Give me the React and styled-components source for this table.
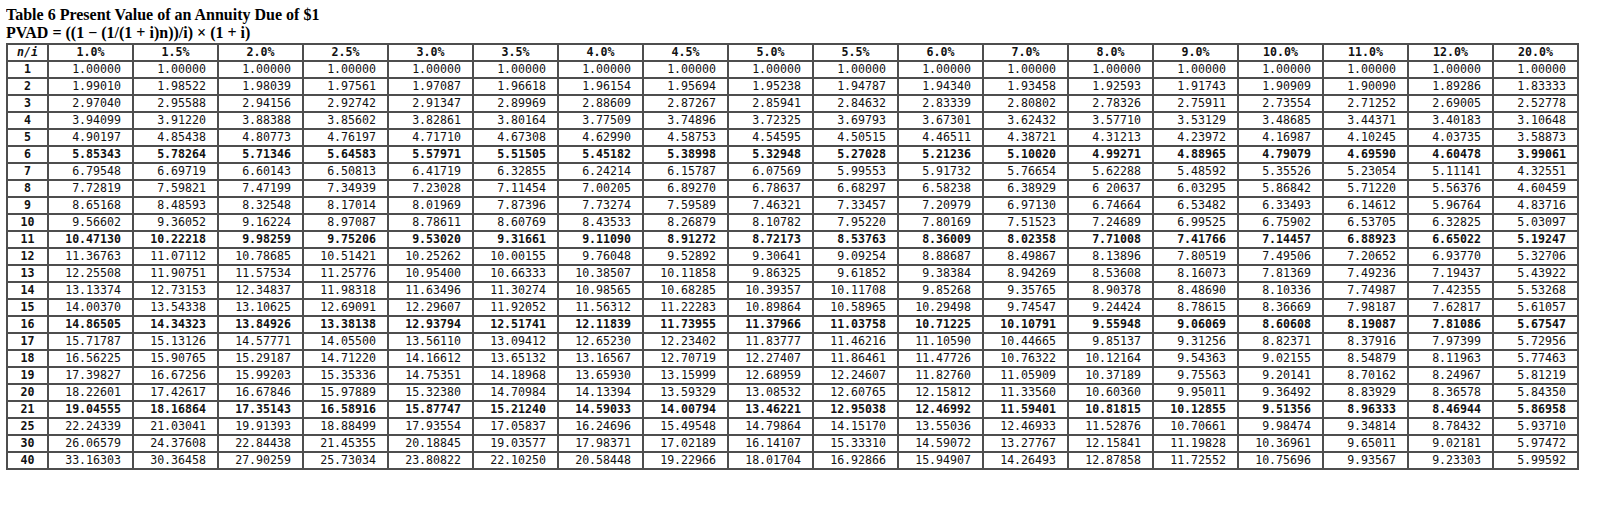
import React from 'react';
import styled, { createGlobalStyle } from 'styled-components';

const GlobalStyle = createGlobalStyle`
  body {
    margin: 6px;
    background: #fff;
    color: #000;
    font-family: "Liberation Serif", "Times New Roman", serif;
  }
`;

const Page = styled.div`
  display: flex;
  flex-direction: column;
  align-items: flex-start;
`;

const Heading = styled.div`
  font-family: "Liberation Serif", "Times New Roman", serif;
  font-weight: bold;
  font-size: 16px;
  line-height: 18.4px;
  color: #000;
`;

const Table = styled.table`
  border-collapse: collapse;
  table-layout: fixed;
  width: 1571px;
  font-family: "DejaVu Sans Mono", "Liberation Mono", monospace;
  font-size: 11.6px;
  color: #111;
  border: 2px solid #4e4e4e;
`;

const Col = styled.col`
  width: ${p => (p.$first ? '41px' : '85px')};
`;

const Th = styled.th`
  border: 2px solid #4e4e4e;
  padding: 0;
  height: 15.5px;
  line-height: 15px;
  font-weight: bold;
  text-align: center;
  font-style: ${p => (p.$italic ? 'italic' : 'normal')};
`;

const RowHead = styled.td`
  border: 2px solid #4e4e4e;
  padding: 0;
  height: 15px;
  line-height: 15px;
  text-align: center;
  font-weight: bold;
`;

const Cell = styled.td`
  border: 2px solid #4e4e4e;
  padding: 0 11px 0 0;
  height: 15px;
  line-height: 15px;
  text-align: right;
  font-weight: ${p => (p.$bold ? 'bold' : 'normal')};
  white-space: pre;
`;

const periods = [1, 2, 3, 4, 5, 6, 7, 8, 9, 10, 11, 12, 13, 14, 15, 16, 17, 18, 19, 20, 21, 25, 30, 40];
const boldRows = [6, 11, 16, 21];

const columns = [
  ['1.0%', '1.00000,1.99010,2.97040,3.94099,4.90197,5.85343,6.79548,7.72819,8.65168,9.56602,10.47130,11.36763,12.25508,13.13374,14.00370,14.86505,15.71787,16.56225,17.39827,18.22601,19.04555,22.24339,26.06579,33.16303'],
  ['1.5%', '1.00000,1.98522,2.95588,3.91220,4.85438,5.78264,6.69719,7.59821,8.48593,9.36052,10.22218,11.07112,11.90751,12.73153,13.54338,14.34323,15.13126,15.90765,16.67256,17.42617,18.16864,21.03041,24.37608,30.36458'],
  ['2.0%', '1.00000,1.98039,2.94156,3.88388,4.80773,5.71346,6.60143,7.47199,8.32548,9.16224,9.98259,10.78685,11.57534,12.34837,13.10625,13.84926,14.57771,15.29187,15.99203,16.67846,17.35143,19.91393,22.84438,27.90259'],
  ['2.5%', '1.00000,1.97561,2.92742,3.85602,4.76197,5.64583,6.50813,7.34939,8.17014,8.97087,9.75206,10.51421,11.25776,11.98318,12.69091,13.38138,14.05500,14.71220,15.35336,15.97889,16.58916,18.88499,21.45355,25.73034'],
  ['3.0%', '1.00000,1.97087,2.91347,3.82861,4.71710,5.57971,6.41719,7.23028,8.01969,8.78611,9.53020,10.25262,10.95400,11.63496,12.29607,12.93794,13.56110,14.16612,14.75351,15.32380,15.87747,17.93554,20.18845,23.80822'],
  ['3.5%', '1.00000,1.96618,2.89969,3.80164,4.67308,5.51505,6.32855,7.11454,7.87396,8.60769,9.31661,10.00155,10.66333,11.30274,11.92052,12.51741,13.09412,13.65132,14.18968,14.70984,15.21240,17.05837,19.03577,22.10250'],
  ['4.0%', '1.00000,1.96154,2.88609,3.77509,4.62990,5.45182,6.24214,7.00205,7.73274,8.43533,9.11090,9.76048,10.38507,10.98565,11.56312,12.11839,12.65230,13.16567,13.65930,14.13394,14.59033,16.24696,17.98371,20.58448'],
  ['4.5%', '1.00000,1.95694,2.87267,3.74896,4.58753,5.38998,6.15787,6.89270,7.59589,8.26879,8.91272,9.52892,10.11858,10.68285,11.22283,11.73955,12.23402,12.70719,13.15999,13.59329,14.00794,15.49548,17.02189,19.22966'],
  ['5.0%', '1.00000,1.95238,2.85941,3.72325,4.54595,5.32948,6.07569,6.78637,7.46321,8.10782,8.72173,9.30641,9.86325,10.39357,10.89864,11.37966,11.83777,12.27407,12.68959,13.08532,13.46221,14.79864,16.14107,18.01704'],
  ['5.5%', '1.00000,1.94787,2.84632,3.69793,4.50515,5.27028,5.99553,6.68297,7.33457,7.95220,8.53763,9.09254,9.61852,10.11708,10.58965,11.03758,11.46216,11.86461,12.24607,12.60765,12.95038,14.15170,15.33310,16.92866'],
  ['6.0%', '1.00000,1.94340,2.83339,3.67301,4.46511,5.21236,5.91732,6.58238,7.20979,7.80169,8.36009,8.88687,9.38384,9.85268,10.29498,10.71225,11.10590,11.47726,11.82760,12.15812,12.46992,13.55036,14.59072,15.94907'],
  ['7.0%', '1.00000,1.93458,2.80802,3.62432,4.38721,5.10020,5.76654,6.38929,6.97130,7.51523,8.02358,8.49867,8.94269,9.35765,9.74547,10.10791,10.44665,10.76322,11.05909,11.33560,11.59401,12.46933,13.27767,14.26493'],
  ['8.0%', '1.00000,1.92593,2.78326,3.57710,4.31213,4.99271,5.62288,6 20637,6.74664,7.24689,7.71008,8.13896,8.53608,8.90378,9.24424,9.55948,9.85137,10.12164,10.37189,10.60360,10.81815,11.52876,12.15841,12.87858'],
  ['9.0%', '1.00000,1.91743,2.75911,3.53129,4.23972,4.88965,5.48592,6.03295,6.53482,6.99525,7.41766,7.80519,8.16073,8.48690,8.78615,9.06069,9.31256,9.54363,9.75563,9.95011,10.12855,10.70661,11.19828,11.72552'],
  ['10.0%', '1.00000,1.90909,2.73554,3.48685,4.16987,4.79079,5.35526,5.86842,6.33493,6.75902,7.14457,7.49506,7.81369,8.10336,8.36669,8.60608,8.82371,9.02155,9.20141,9.36492,9.51356,9.98474,10.36961,10.75696'],
  ['11.0%', '1.00000,1.90090,2.71252,3.44371,4.10245,4.69590,5.23054,5.71220,6.14612,6.53705,6.88923,7.20652,7.49236,7.74987,7.98187,8.19087,8.37916,8.54879,8.70162,8.83929,8.96333,9.34814,9.65011,9.93567'],
  ['12.0%', '1.00000,1.89286,2.69005,3.40183,4.03735,4.60478,5.11141,5.56376,5.96764,6.32825,6.65022,6.93770,7.19437,7.42355,7.62817,7.81086,7.97399,8.11963,8.24967,8.36578,8.46944,8.78432,9.02181,9.23303'],
  ['20.0%', '1.00000,1.83333,2.52778,3.10648,3.58873,3.99061,4.32551,4.60459,4.83716,5.03097,5.19247,5.32706,5.43922,5.53268,5.61057,5.67547,5.72956,5.77463,5.81219,5.84350,5.86958,5.93710,5.97472,5.99592'],
].map(([rate, values]) => ({ rate, values: values.split(',') }));

const App = () => (
  <Page>
    <GlobalStyle />
    <Heading>Table 6 Present Value of an Annuity Due of $1</Heading>
    <Heading>PVAD = ((1 − (1/(1 + i)n))/i) × (1 + i)</Heading>
    <Table>
      <colgroup>
        <Col $first />
        {columns.map(c => <Col key={c.rate} />)}
      </colgroup>
      <thead>
        <tr>
          <Th $italic>n/i</Th>
          {columns.map(c => <Th key={c.rate}>{c.rate}</Th>)}
        </tr>
      </thead>
      <tbody>
        {periods.map((n, row) => (
          <tr key={n}>
            <RowHead>{n}</RowHead>
            {columns.map(c => (
              <Cell key={c.rate} $bold={boldRows.includes(n)}>{c.values[row]}</Cell>
            ))}
          </tr>
        ))}
      </tbody>
    </Table>
  </Page>
);

export default App;
